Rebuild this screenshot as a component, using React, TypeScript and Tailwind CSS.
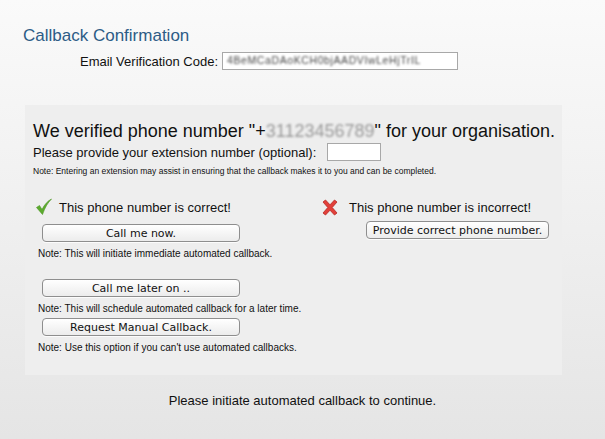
const sans = "font-['Liberation_Sans',Arial,sans-serif]";
const btnFont = "font-['DejaVu_Sans','Liberation_Sans',sans-serif]";

function MacButton({ label, className = "" }: { label: string; className?: string }) {
  return (
    <button
      className={`block h-[18px] rounded-[4px] border border-[#8e8e8e] bg-gradient-to-b from-white to-[#ececec] text-[11px] leading-none text-[#111] shadow-[0_1px_0_rgba(255,255,255,0.8)] ${btnFont} ${className}`}
    >
      {label}
    </button>
  );
}

function CheckIcon() {
  return (
    <svg width="18" height="18" viewBox="0 0 18 18">
      <path
        d="M1.5 9.5 L4.5 7.5 L7 11.5 C9.5 6.5 12.5 3 16.5 1 C12.5 5 10 9.5 7.5 16.5 Z"
        fill="#5cab2e"
        stroke="#4a9422"
        strokeWidth="0.6"
        strokeLinejoin="round"
      />
    </svg>
  );
}

function CrossIcon() {
  return (
    <svg width="18" height="17" viewBox="0 0 18 17">
      <path
        d="M2 3 L4.5 1 L9 5.8 L13.5 1 L16 3 L11.2 8.5 L16 14 L13.5 16 L9 11.2 L4.5 16 L2 14 L6.8 8.5 Z"
        fill="#e2403a"
        stroke="#b52822"
        strokeWidth="0.8"
        strokeLinejoin="round"
      />
    </svg>
  );
}

function Note({ children, className = "" }: { children: React.ReactNode; className?: string }) {
  return <p className={`text-[10px] leading-[12px] text-[#111] ${className}`}>{children}</p>;
}

export default function App() {
  return (
    <div className={`min-h-[439px] w-full bg-gradient-to-b from-[#fafafa] to-[#e5e5e5] pt-[26px] ${sans}`}>
      <h1 className="pl-[23px] text-[17px] leading-[20px] text-[#2d5c86]">Callback Confirmation</h1>

      {/* Email code row */}
      <div className="mt-[6px] flex h-[18px] items-center pl-[80px]">
        <span className="text-[13px] leading-none text-[#111]">Email Verification Code:</span>
        <div className="ml-[4px] flex h-[18px] w-[236px] items-center overflow-hidden border border-[#a8a8a8] bg-white px-[4px]">
          <span className="inline-block text-[10.5px] tracking-[0.6px] text-[#444] blur-[1px]">
            4BeMCaDAoKCH0bjAADVIwLeHjTrIL
          </span>
        </div>
      </div>

      {/* Main panel */}
      <div className="ml-[25px] mt-[35px] w-[537px] bg-[#eeeeee] pb-[21px] pl-[8px] pt-[15px]">
        <p className="whitespace-nowrap text-[18px] leading-[22px] text-[#111]">
          We verified phone number "+
          <span className="inline-block text-[#999] blur-[1.3px]">31123456789</span>
          " for your organisation.
        </p>

        <div className="mt-[1px] flex h-[18px] items-center">
          <span className="text-[13px] leading-none text-[#111]">Please provide your extension number (optional):</span>
          <input className="ml-[11px] h-[18px] w-[54px] border border-[#a8a8a8] bg-white outline-none" />
        </div>

        <p className="mt-[4px] text-[8.5px] leading-[12px] text-[#111]">
          Note: Entering an extension may assist in ensuring that the callback makes it to you and can be completed.
        </p>

        <div className="mt-[21px] flex">
          {/* Correct column */}
          <div className="w-[288px]">
            <div className="flex h-[18px] items-center pl-[2px]">
              <CheckIcon />
              <span className="ml-[6px] text-[13px] leading-none text-[#111]">This phone number is correct!</span>
            </div>
            <MacButton label="Call me now." className="ml-[9px] mt-[8px] w-[198px]" />
            <Note className="ml-[5px] mt-[6px]">Note: This will initiate immediate automated callback.</Note>

            <MacButton label="Call me later on .." className="ml-[9px] mt-[19px] w-[198px]" />
            <Note className="ml-[5px] mt-[6px]">Note: This will schedule automated callback for a later time.</Note>

            <MacButton label="Request Manual Callback." className="ml-[9px] mt-[3px] w-[198px]" />
            <Note className="ml-[5px] mt-[6px]">Note: Use this option if you can't use automated callbacks.</Note>
          </div>

          {/* Incorrect column */}
          <div>
            <div className="flex h-[18px] items-center">
              <CrossIcon />
              <span className="ml-[10px] text-[13px] leading-none text-[#111]">This phone number is incorrect!</span>
            </div>
            <MacButton label="Provide correct phone number." className="ml-[45px] mt-[5px] w-[183px]" />
          </div>
        </div>
      </div>

      <p className="mt-[18px] text-center text-[13px] leading-[16px] text-[#111]">
        Please initiate automated callback to continue.
      </p>
    </div>
  );
}
